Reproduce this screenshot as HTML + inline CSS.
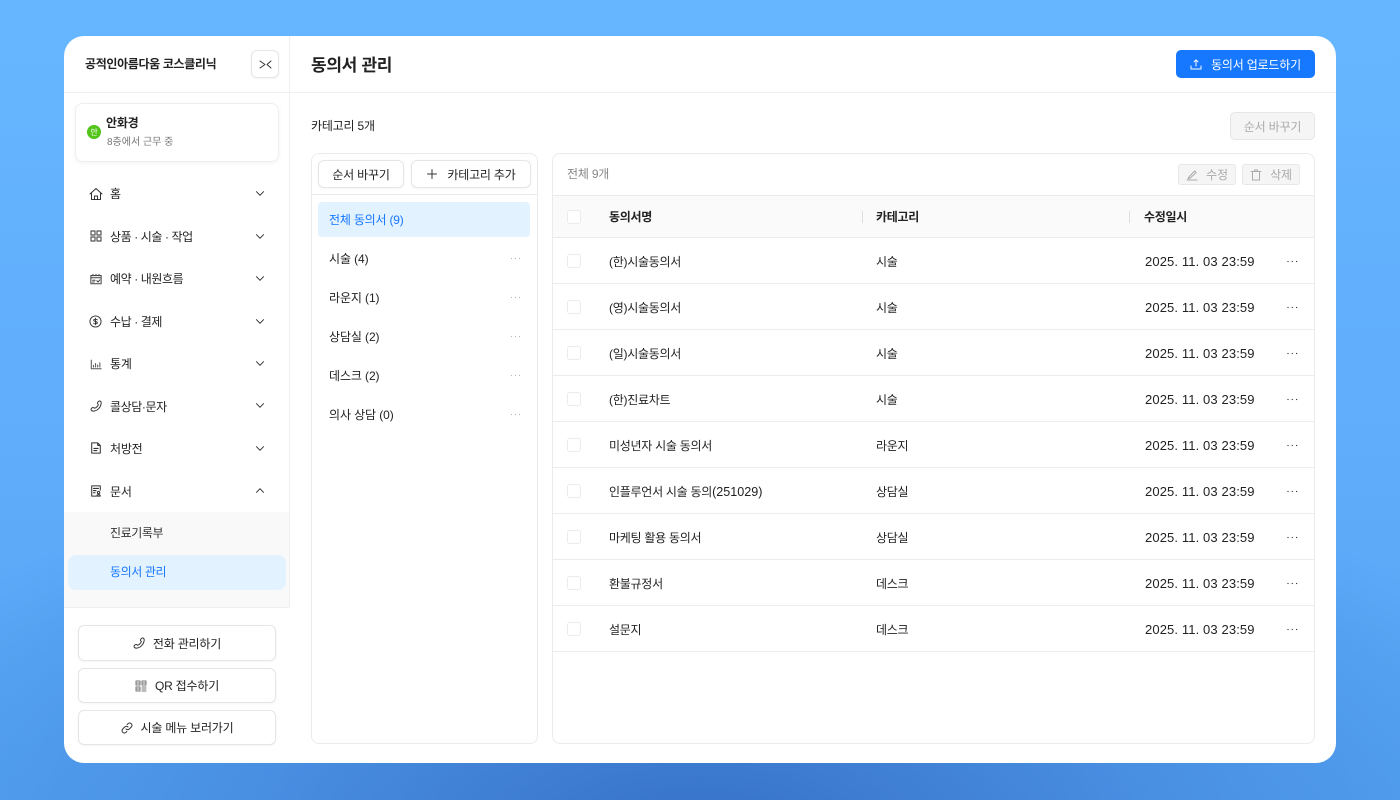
<!DOCTYPE html>
<html lang="ko"><head><meta charset="utf-8"><title>동의서 관리</title>
<style>
*{box-sizing:border-box;margin:0;padding:0}
html,body{width:1400px;height:800px;overflow:hidden}
body{font-family:"Liberation Sans","Noto Sans CJK KR",sans-serif;font-size:12px;color:#222;position:relative;letter-spacing:-.2px;
background:radial-gradient(ellipse 900px 420px at 700px 840px,#3670c6 0%,#4a91e4 55%,rgba(85,165,245,0) 100%),linear-gradient(180deg,#66b6ff 0%,#60aefc 50%,#55a4f2 100%)}
.a{position:absolute}
.t{position:absolute;white-space:nowrap;line-height:18px}
.d{font-size:13px;letter-spacing:.12px;left:1081px}
.n{font-size:12.6px;letter-spacing:0}
.nv{letter-spacing:-.4px}
.r{letter-spacing:-.27px}
.l{letter-spacing:-.1px}
#app{position:absolute;left:64px;top:36px;width:1272px;height:727px;background:#fff;border-radius:20px;overflow:hidden}
.btn{position:absolute;background:#fff;border:1px solid #e5e5e5;border-radius:6px;box-shadow:0 1px 2px rgba(0,0,0,.04)}
.c{display:flex;align-items:center;justify-content:center;white-space:nowrap}
svg{display:block;fill:none;stroke:#333;stroke-width:1;stroke-linecap:round;stroke-linejoin:round}
.ic{stroke-width:1.2}
.ck{position:absolute;left:503px;width:14px;height:14px;border:1px solid #ebebeb;border-radius:3px;background:#fff}
.ln{position:absolute;left:488px;width:762px;height:1px;background:#ececec}
.dg{stroke:#b5b5b5;stroke-width:1.2;stroke-dasharray:0 4}
.dk{stroke:#333;stroke-width:1.3;stroke-dasharray:0 4.300}
</style></head><body>
<div id="app">
<!-- sidebar -->
<div class="a" style="left:225px;top:0;width:1px;height:572px;background:#f0f0f0"></div>
<div class="a" style="left:0;top:56px;width:1272px;height:1px;background:#f0f0f0"></div>
<div class="t" style="left:21px;top:19px;font-weight:700;font-size:12px;color:#222;letter-spacing:-.35px">공적인아름다움 코스클리닉</div>
<div class="btn c" style="left:187px;top:14px;width:28px;height:28px"><svg width="13" height="9" viewBox="0 0 13 9"><path d="M1 1 6 4.500 1 8M12 1 8 4.500 12 8"/></svg></div>
<div class="a" style="left:11px;top:67px;width:204px;height:59px;border:1px solid #efefef;border-radius:8px;box-shadow:0 1px 4px rgba(0,0,0,.06)"></div>
<div class="a c" style="left:23px;top:89px;width:14px;height:14px;border-radius:50%;background:#52c41a;color:#fff;font-size:8px">안</div>
<div class="t" style="left:42px;top:78px;font-weight:700;color:#222">안화경</div>
<div class="t" style="left:43px;top:98px;font-size:10px;color:#777;letter-spacing:0">8층에서 근무 중</div>

<div class="t" style="left:46px;top:149px">홈</div>
<div class="t nv" style="left:46px;top:192px">상품 · 시술 · 작업</div>
<div class="t nv" style="left:46px;top:234px">예약 · 내원흐름</div>
<div class="t nv" style="left:46px;top:277px">수납 · 결제</div>
<div class="t" style="left:46px;top:319px">통계</div>
<div class="t nv" style="left:46px;top:362px">콜상담·문자</div>
<div class="t" style="left:46px;top:404px">처방전</div>
<div class="t" style="left:46px;top:447px">문서</div>
<!-- chevrons -->
<svg class="a" style="left:192px;top:155px" width="8" height="5" viewBox="0 0 8 5"><path d="M.5.700 4 4.300 7.500.700"/></svg>
<svg class="a" style="left:192px;top:198px" width="8" height="5" viewBox="0 0 8 5"><path d="M.5.700 4 4.300 7.500.700"/></svg>
<svg class="a" style="left:192px;top:240px" width="8" height="5" viewBox="0 0 8 5"><path d="M.5.700 4 4.300 7.500.700"/></svg>
<svg class="a" style="left:192px;top:283px" width="8" height="5" viewBox="0 0 8 5"><path d="M.5.700 4 4.300 7.500.700"/></svg>
<svg class="a" style="left:192px;top:325px" width="8" height="5" viewBox="0 0 8 5"><path d="M.5.700 4 4.300 7.500.700"/></svg>
<svg class="a" style="left:192px;top:367px" width="8" height="5" viewBox="0 0 8 5"><path d="M.5.700 4 4.300 7.500.700"/></svg>
<svg class="a" style="left:192px;top:410px" width="8" height="5" viewBox="0 0 8 5"><path d="M.5.700 4 4.300 7.500.700"/></svg>
<svg class="a" style="left:192px;top:452px" width="8" height="5" viewBox="0 0 8 5"><path d="M.5 4.300 4 .7 7.500 4.300"/></svg>
<!-- nav icons -->
<svg class="a" style="left:25px;top:151px" width="14" height="14" viewBox="0 0 14 14"><path d="M1 7 7 1.500 13 7M2.500 6v6.500h9V6M5.500 12.500V9h3v3.500"/></svg>
<svg class="a ic" style="left:26px;top:194px;stroke:#555" width="12" height="12" viewBox="0 0 12 12"><path d="M1 1h4v4H1zM7 1h4v4H7zM1 7h4v4H1zM7 7h4v4H7z"/></svg>
<svg class="a ic" style="left:26px;top:237px;stroke:#444" width="12" height="12" viewBox="0 0 14 14"><path d="M1 3h12v9.500H1zM1 5.500h12M3.500 1.500V3M7 1.500V3M10.500 1.500V3M3 8.500h3M3 10.500h2M8 9l1.500 1.500L11.500 8"/></svg>
<svg class="a" style="left:25px;top:279px" width="13" height="13" viewBox="0 0 14 14"><circle cx="7" cy="7" r="6"/><path d="M9 5.200C8.500 4.400 5 4 5 5.700 5 7.400 9 6.600 9 8.400 9 10 5.500 9.700 5 8.800M7 3.500v7"/></svg>
<svg class="a ic" style="left:26px;top:322px;stroke:#555" width="12" height="12" viewBox="0 0 14 14"><path d="M1.500 2.500v10H13M4 10.500V8.500M6.500 10.500V6.500M9 10.500V8M11.500 10.500V5.500"/></svg>
<svg class="a" style="left:26px;top:364px" width="12" height="12" viewBox="0 0 12 12"><path d="M7.500 3.200C7.500 1.800 9 .8 10 1c1 .2 1.500 1.500 1 3.500-.7 3-3.500 6-6.500 6.500C2.500 11.400 1 10.800 1 9.500c0-1 1-2 2.200-2 .8 0 1.100.8 1.600.7C6.200 7.800 8 6 8.300 4.700c.1-.5-.8-.7-.8-1.500z"/></svg>
<svg class="a ic" style="left:26px;top:406px" width="12" height="12" viewBox="0 0 14 14"><path d="M2 1h7l3 3v9H2zM9 1v3h3M4.500 7.500h5M4.500 10h3.500"/></svg>
<svg class="a ic" style="left:26px;top:449px" width="12" height="12" viewBox="0 0 14 14"><path d="M12 6V1H2v12h5M4 4h6M4 6.500h3M4 9h2"/><circle cx="10" cy="8.800" r="1.400"/><path d="M8 13c0-2.300 4-2.300 4 0z"/></svg>

<div class="a" style="left:0;top:476px;width:225px;height:96px;background:#f9f9f9"></div>
<div class="a" style="left:0;top:571px;width:226px;height:1px;background:#f0f0f0"></div>
<div class="a" style="left:4px;top:519px;width:218px;height:35px;border-radius:8px;background:#e3f2ff"></div>
<div class="t" style="left:46px;top:488px;color:#333;letter-spacing:-.4px">진료기록부</div>
<div class="t" style="left:46px;top:527px;color:#1677ff;letter-spacing:-.4px">동의서 관리</div>

<div class="btn c" style="left:14px;top:589px;width:198px;height:36px;gap:8px"><svg width="12" height="12" viewBox="0 0 12 12"><path d="M7.500 3.200C7.500 1.800 9 .8 10 1c1 .2 1.500 1.500 1 3.500-.7 3-3.500 6-6.500 6.500C2.500 11.400 1 10.800 1 9.500c0-1 1-2 2.200-2 .8 0 1.100.8 1.600.7C6.200 7.800 8 6 8.300 4.700c.1-.5-.8-.7-.8-1.500z"/></svg><span>전화 관리하기</span></div>
<div class="btn c" style="left:14px;top:632px;width:198px;height:35px;gap:8px"><svg style="stroke:#777" width="12" height="12" viewBox="0 0 12 12"><path d="M1 1h4v4H1zM7 1h4v4H7zM1 7h4v4H1zM7 7h4M7 9h4M7 11h4M1 3h4M7 3h4M1 9h4"/></svg><span>QR 접수하기</span></div>
<div class="btn c" style="left:14px;top:674px;width:198px;height:35px;gap:8px"><svg width="12" height="12" viewBox="0 0 12 12"><path d="M5 7a2.300 2.300 0 0 0 3.300 0l2-2A2.300 2.300 0 0 0 7 1.700l-.8.800M7 5a2.300 2.300 0 0 0-3.300 0l-2 2A2.300 2.300 0 0 0 5 10.300l.8-.8"/></svg><span>시술 메뉴 보러가기</span></div>

<!-- header -->
<div class="t" style="left:247px;top:18px;font-size:17px;line-height:24px;font-weight:700;color:#222;letter-spacing:-.3px">동의서 관리</div>
<div class="a c" style="left:1112px;top:14px;width:139px;height:28px;background:#1677ff;border-radius:5px;color:#fff;gap:9px"><svg style="stroke:#fff" width="12" height="12" viewBox="0 0 12 12"><path d="M6 8V2M4 3.800 6 1.800l2 2M1 8v3h10V8"/></svg><span>동의서 업로드하기</span></div>
<div class="t" style="left:247px;top:81px">카테고리 5개</div>
<div class="a c" style="left:1166px;top:76px;width:85px;height:28px;background:#f5f5f5;border:1px solid #e5e5e5;border-radius:5px;color:#aaa">순서 바꾸기</div>

<!-- left panel -->
<div class="a" style="left:247px;top:117px;width:227px;height:591px;border:1px solid #ebebeb;border-radius:8px"></div>
<div class="a" style="left:248px;top:158px;width:225px;height:1px;background:#ebebeb"></div>
<div class="btn c" style="left:254px;top:124px;width:86px;height:28px">순서 바꾸기</div>
<div class="btn c" style="left:347px;top:124px;width:120px;height:28px;gap:9px"><svg width="12" height="12" viewBox="0 0 12 12"><path d="M6 1.500v9M1.500 6h9"/></svg><span>카테고리 추가</span></div>
<div class="a" style="left:254px;top:166px;width:212px;height:35px;background:#e3f2ff;border-radius:4px"></div>
<div class="t" style="left:265px;top:175px;color:#1677ff">전체 동의서 (9)</div>
<div class="t l" style="left:265px;top:214px">시술 (4)</div>
<div class="t l" style="left:265px;top:253px">라운지 (1)</div>
<div class="t l" style="left:265px;top:292px">상담실 (2)</div>
<div class="t l" style="left:265px;top:331px">데스크 (2)</div>
<div class="t l" style="left:265px;top:370px">의사 상담 (0)</div>
<svg class="a dg" style="left:446px;top:221px" width="12" height="3" viewBox="0 0 12 3"><path d="M1.500 1.500h9"/></svg>
<svg class="a dg" style="left:446px;top:260px" width="12" height="3" viewBox="0 0 12 3"><path d="M1.500 1.500h9"/></svg>
<svg class="a dg" style="left:446px;top:299px" width="12" height="3" viewBox="0 0 12 3"><path d="M1.500 1.500h9"/></svg>
<svg class="a dg" style="left:446px;top:338px" width="12" height="3" viewBox="0 0 12 3"><path d="M1.500 1.500h9"/></svg>
<svg class="a dg" style="left:446px;top:377px" width="12" height="3" viewBox="0 0 12 3"><path d="M1.500 1.500h9"/></svg>

<!-- right panel -->
<div class="a" style="left:488px;top:117px;width:763px;height:591px;border:1px solid #ebebeb;border-radius:8px"></div>
<div class="t" style="left:503px;top:129px;color:#888">전체 9개</div>
<div class="a c" style="left:1114px;top:128px;width:58px;height:21px;background:#f5f5f5;border:1px solid #e8e8e8;border-radius:3px;color:#aaa;gap:8px"><svg style="stroke:#aaa" width="12" height="12" viewBox="0 0 12 12"><path d="M1 11h10M2.500 8.500 8.500 2l1.700 1.500L4 9.300l-2 .4z"/></svg><span>수정</span></div>
<div class="a c" style="left:1178px;top:128px;width:58px;height:21px;background:#f5f5f5;border:1px solid #e8e8e8;border-radius:3px;color:#aaa;gap:8px"><svg style="stroke:#aaa" width="12" height="12" viewBox="0 0 12 12"><path d="M1 2.500h10M4.500 2.500V1h3v1.500M2.500 2.500V11h7V2.500"/></svg><span>삭제</span></div>
<div class="a" style="left:489px;top:159px;width:761px;height:43px;background:#fafafa;border-top:1px solid #ebebeb;border-bottom:1px solid #ebebeb"></div>
<div class="a" style="left:798px;top:175px;width:1px;height:12px;background:#ddd"></div>
<div class="a" style="left:1065px;top:175px;width:1px;height:12px;background:#ddd"></div>
<div class="ck" style="top:174px"></div>
<div class="t r" style="left:545px;top:172px;font-weight:700;color:#222">동의서명</div>
<div class="t r" style="left:812px;top:172px;font-weight:700;color:#222">카테고리</div>
<div class="t r" style="left:1080px;top:172px;font-weight:700;color:#222">수정일시</div>

<div class="ck" style="top:218px"></div><div class="t r" style="left:545px;top:217px">(한)시술동의서</div><div class="t r" style="left:812px;top:217px">시술</div><div class="t d" style="top:217px">2025. 11. 03 23:59</div>
<div class="ln" style="top:247px"></div>
<div class="ck" style="top:264px"></div><div class="t r" style="left:545px;top:263px">(영)시술동의서</div><div class="t r" style="left:812px;top:263px">시술</div><div class="t d" style="top:263px">2025. 11. 03 23:59</div>
<div class="ln" style="top:293px"></div>
<div class="ck" style="top:310px"></div><div class="t r" style="left:545px;top:309px">(일)시술동의서</div><div class="t r" style="left:812px;top:309px">시술</div><div class="t d" style="top:309px">2025. 11. 03 23:59</div>
<div class="ln" style="top:339px"></div>
<div class="ck" style="top:356px"></div><div class="t r" style="left:545px;top:355px">(한)진료차트</div><div class="t r" style="left:812px;top:355px">시술</div><div class="t d" style="top:355px">2025. 11. 03 23:59</div>
<div class="ln" style="top:385px"></div>
<div class="ck" style="top:402px"></div><div class="t r" style="left:545px;top:401px">미성년자 시술 동의서</div><div class="t r" style="left:812px;top:401px">라운지</div><div class="t d" style="top:401px">2025. 11. 03 23:59</div>
<div class="ln" style="top:431px"></div>
<div class="ck" style="top:448px"></div><div class="t r" style="left:545px;top:447px">인플루언서 시술 동의<span class="n">(251029)</span></div><div class="t r" style="left:812px;top:447px">상담실</div><div class="t d" style="top:447px">2025. 11. 03 23:59</div>
<div class="ln" style="top:477px"></div>
<div class="ck" style="top:494px"></div><div class="t r" style="left:545px;top:493px">마케팅 활용 동의서</div><div class="t r" style="left:812px;top:493px">상담실</div><div class="t d" style="top:493px">2025. 11. 03 23:59</div>
<div class="ln" style="top:523px"></div>
<div class="ck" style="top:540px"></div><div class="t r" style="left:545px;top:539px">환불규정서</div><div class="t r" style="left:812px;top:539px">데스크</div><div class="t d" style="top:539px">2025. 11. 03 23:59</div>
<div class="ln" style="top:569px"></div>
<div class="ck" style="top:586px"></div><div class="t r" style="left:545px;top:585px">설문지</div><div class="t r" style="left:812px;top:585px">데스크</div><div class="t d" style="top:585px">2025. 11. 03 23:59</div>
<div class="ln" style="top:615px"></div>
<svg class="a dk" style="left:1222px;top:224px" width="13" height="3" viewBox="0 0 13 3"><path d="M2 1.500h9"/></svg>
<svg class="a dk" style="left:1222px;top:270px" width="13" height="3" viewBox="0 0 13 3"><path d="M2 1.500h9"/></svg>
<svg class="a dk" style="left:1222px;top:316px" width="13" height="3" viewBox="0 0 13 3"><path d="M2 1.500h9"/></svg>
<svg class="a dk" style="left:1222px;top:362px" width="13" height="3" viewBox="0 0 13 3"><path d="M2 1.500h9"/></svg>
<svg class="a dk" style="left:1222px;top:408px" width="13" height="3" viewBox="0 0 13 3"><path d="M2 1.500h9"/></svg>
<svg class="a dk" style="left:1222px;top:454px" width="13" height="3" viewBox="0 0 13 3"><path d="M2 1.500h9"/></svg>
<svg class="a dk" style="left:1222px;top:500px" width="13" height="3" viewBox="0 0 13 3"><path d="M2 1.500h9"/></svg>
<svg class="a dk" style="left:1222px;top:546px" width="13" height="3" viewBox="0 0 13 3"><path d="M2 1.500h9"/></svg>
<svg class="a dk" style="left:1222px;top:592px" width="13" height="3" viewBox="0 0 13 3"><path d="M2 1.500h9"/></svg>
</div>
</body></html>
